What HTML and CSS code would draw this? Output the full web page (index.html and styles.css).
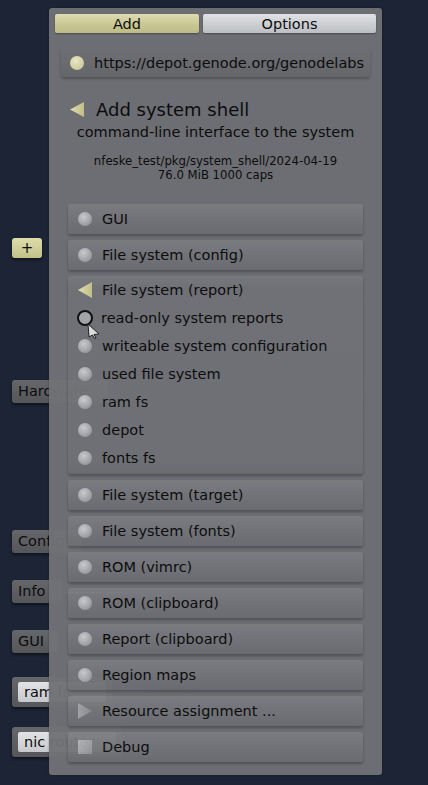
FILE: index.html
```html
<!DOCTYPE html>
<html>
<head>
<meta charset="utf-8">
<link rel="stylesheet" href="styles.css">
</head>
<body>
<div class="desk">
  <div class="node plus" style="left:12px;top:238px;width:30px;height:20px">+</div>
  <div class="node" style="left:12px;top:380px;width:96px;height:23px">Hardware</div>
  <div class="node" style="left:12px;top:530px;width:70px;height:23px">Config</div>
  <div class="node" style="left:12px;top:580px;width:50px;height:23px">Info</div>
  <div class="node" style="left:12px;top:630px;width:46px;height:23px">GUI</div>
  <div class="node frame" style="left:12px;top:677px;width:100px;height:30px"><span class="inner">ram fs</span></div>
  <div class="node frame" style="left:12px;top:727px;width:110px;height:30px"><span class="inner">nic router</span></div>
  <div class="wire" style="left:62px;top:592px;width:60px"></div>
  <div class="wire" style="left:110px;top:691px;width:40px"></div>
  <div class="ghost" style="left:160px;top:682px">depot</div>
</div>

<div class="panel">
  <div class="tabs">
    <div class="tab tab-add">Add</div>
    <div class="tab tab-opt">Options</div>
  </div>

  <div class="url">
    <span class="dot dot-yellow"></span>
    <span>https://depot.genode.org/genodelabs</span>
  </div>

  <div class="heading">
    <svg class="tri-head" width="14" height="15" viewBox="0 0 14 15"><defs><linearGradient id="gy" x1="0" y1="0" x2="1" y2="0"><stop offset="0" stop-color="#e8e6b8"/><stop offset="1" stop-color="#c8c58a"/></linearGradient></defs><polygon points="0,7.5 14,0 14,15" fill="url(#gy)"/></svg>
    <span>Add system shell</span>
  </div>
  <div class="sub">command-line interface to the system</div>
  <div class="info">nfeske_test/pkg/system_shell/2024-04-19<br>76.0 MiB 1000 caps</div>

  <div class="list">
    <div class="card"><span class="dot"></span><span>GUI</span></div>
    <div class="card"><span class="dot"></span><span>File system (config)</span></div>
    <div class="card group">
      <div class="row"><svg class="ico" width="14" height="16" viewBox="0 0 14 16"><defs><linearGradient id="gy2" x1="0" y1="0" x2="1" y2="0"><stop offset="0" stop-color="#e8e6b8"/><stop offset="1" stop-color="#c8c58a"/></linearGradient></defs><polygon points="0,8 14,0 14,16" fill="url(#gy2)"/></svg><span>File system (report)</span></div>
      <div class="row"><span class="ring"></span><span>read-only system reports</span>
        <svg class="cursor" width="14" height="16" viewBox="0 0 14 16"><polygon points="1,1 12,11 7,11.5 9,15 7.5,15.5 5.5,12 2,14" fill="#e4e4e4" stroke="#222" stroke-width="1"/></svg>
      </div>
      <div class="row"><span class="dot"></span><span>writeable system configuration</span></div>
      <div class="row"><span class="dot"></span><span>used file system</span></div>
      <div class="row"><span class="dot"></span><span>ram fs</span></div>
      <div class="row"><span class="dot"></span><span>depot</span></div>
      <div class="row"><span class="dot"></span><span>fonts fs</span></div>
    </div>
    <div class="card"><span class="dot"></span><span>File system (target)</span></div>
    <div class="card"><span class="dot"></span><span>File system (fonts)</span></div>
    <div class="card"><span class="dot"></span><span>ROM (vimrc)</span></div>
    <div class="card"><span class="dot"></span><span>ROM (clipboard)</span></div>
    <div class="card"><span class="dot"></span><span>Report (clipboard)</span></div>
    <div class="card"><span class="dot"></span><span>Region maps</span></div>
    <div class="card"><svg class="ico" width="14" height="16" viewBox="0 0 14 16"><defs><linearGradient id="gg" x1="0" y1="0" x2="1" y2="0"><stop offset="0" stop-color="#a6a7aa"/><stop offset="1" stop-color="#8c8d90"/></linearGradient></defs><polygon points="0,0 14,8 0,16" fill="url(#gg)"/></svg><span>Resource assignment ...</span></div>
    <div class="card"><span class="box"></span><span>Debug</span></div>
  </div>
</div>
</body>
</html>
```

FILE: styles.css
```css
html, body {
  margin: 0;
  padding: 0;
}
body {
  width: 428px;
  height: 785px;
  overflow: hidden;
  background: #1c2435;
  font-family: "DejaVu Sans", sans-serif;
  color: #0c0c0c;
  position: relative;
}

.desk {
  position: absolute;
  inset: 0;
}
.node {
  position: absolute;
  box-sizing: border-box;
  background: linear-gradient(#66676b, #55565a);
  border-radius: 3px;
  box-shadow: 0 2px 3px rgba(0,0,0,.45);
  font-size: 14.5px;
  line-height: 23px;
  padding-left: 6px;
  color: #0c0c0c;
}
.node.plus {
  background: linear-gradient(#dedca8, #c3c18a);
  padding: 0;
  text-align: center;
  line-height: 20px;
  font-size: 15px;
}
.node.frame {
  padding: 5px 6px;
}
.node .inner {
  display: block;
  background: linear-gradient(#e2e3e5, #c6c8cb);
  border-radius: 2px;
  height: 20px;
  line-height: 20px;
  padding-left: 6px;
}
.wire {
  position: absolute;
  height: 1px;
  background: #8a8b8f;
}
.ghost {
  position: absolute;
  font-size: 14.5px;
  color: #0c0c0c;
}

.panel {
  position: absolute;
  left: 49px;
  top: 8px;
  width: 333px;
  height: 767px;
  box-sizing: border-box;
  background: #717276;
  opacity: 0.96;
  border-radius: 3px;
  padding: 6px 6px 0 6px;
  box-shadow: 0 0 2px rgba(0,0,0,.4);
}

.tabs {
  display: flex;
  gap: 4px;
  height: 19px;
}
.tab {
  font-size: 14.5px;
  line-height: 20px;
  text-align: center;
  border-radius: 2px;
  box-shadow: 0 1px 2px rgba(0,0,0,.35);
}
.tab-add {
  width: 144px;
  background: linear-gradient(#e6e4b6, #cfcd96 60%, #c4c289);
}
.tab-opt {
  flex: 1;
  background: linear-gradient(#e8e9ec, #d2d4d7 60%, #c3c5c9);
}

.url {
  margin: 15px 6px 0 6px;
  height: 29px;
  display: flex;
  align-items: center;
  gap: 10px;
  padding-left: 9px;
  background: linear-gradient(#727377, #68696d);
  border-radius: 3px;
  box-shadow: 0 2px 3px rgba(0,0,0,.25);
  font-size: 14.5px;
  white-space: nowrap;
  overflow: hidden;
}

.dot {
  flex: none;
  width: 14px;
  height: 14px;
  border-radius: 50%;
  background: radial-gradient(circle at 40% 35%, #cfd0d3, #a3a4a7 65%, #8e8f92);
}
.dot-yellow {
  background: radial-gradient(circle at 40% 35%, #efeecb, #d9d6a4 65%, #c8c58e);
}

.heading {
  margin-top: 20px;
  padding-left: 15px;
  height: 24px;
  display: flex;
  align-items: center;
  gap: 12px;
  font-size: 18px;
}
.tri-head { flex: none; }

.sub {
  font-size: 14.5px;
  line-height: 22px;
  text-align: center;
}
.info {
  margin-top: 11px;
  font-size: 11.7px;
  line-height: 14px;
  text-align: center;
}

.list {
  margin: 22px 13px 0 13px;
  display: flex;
  flex-direction: column;
  gap: 6px;
}
.card {
  height: 30px;
  box-sizing: border-box;
  display: flex;
  align-items: center;
  gap: 10px;
  padding-left: 10px;
  background: linear-gradient(#7f8084, #77787c 45%, #6e6f73);
  border-radius: 3px;
  box-shadow: 0 2px 3px rgba(0,0,0,.28);
  font-size: 14.5px;
  white-space: nowrap;
}
.card.group {
  height: 198px;
  display: block;
  padding: 0 0 2px 10px;
  background: linear-gradient(#7b7c80, #747579 6%, #737478 94%, #6c6d71);
}
.row {
  height: 28px;
  display: flex;
  align-items: center;
  gap: 10px;
  position: relative;
}
.ico { flex: none; }
.ring {
  flex: none;
  width: 12px;
  height: 12px;
  border-radius: 50%;
  border: 2px solid #101010;
  background: #a9aaad;
  margin-left: -1px;
  margin-right: -2px;
}
.cursor {
  position: absolute;
  left: 9px;
  top: 19px;
}
.box {
  flex: none;
  width: 14px;
  height: 14px;
  background: linear-gradient(135deg, #b4b5b8, #909194);
}
```
